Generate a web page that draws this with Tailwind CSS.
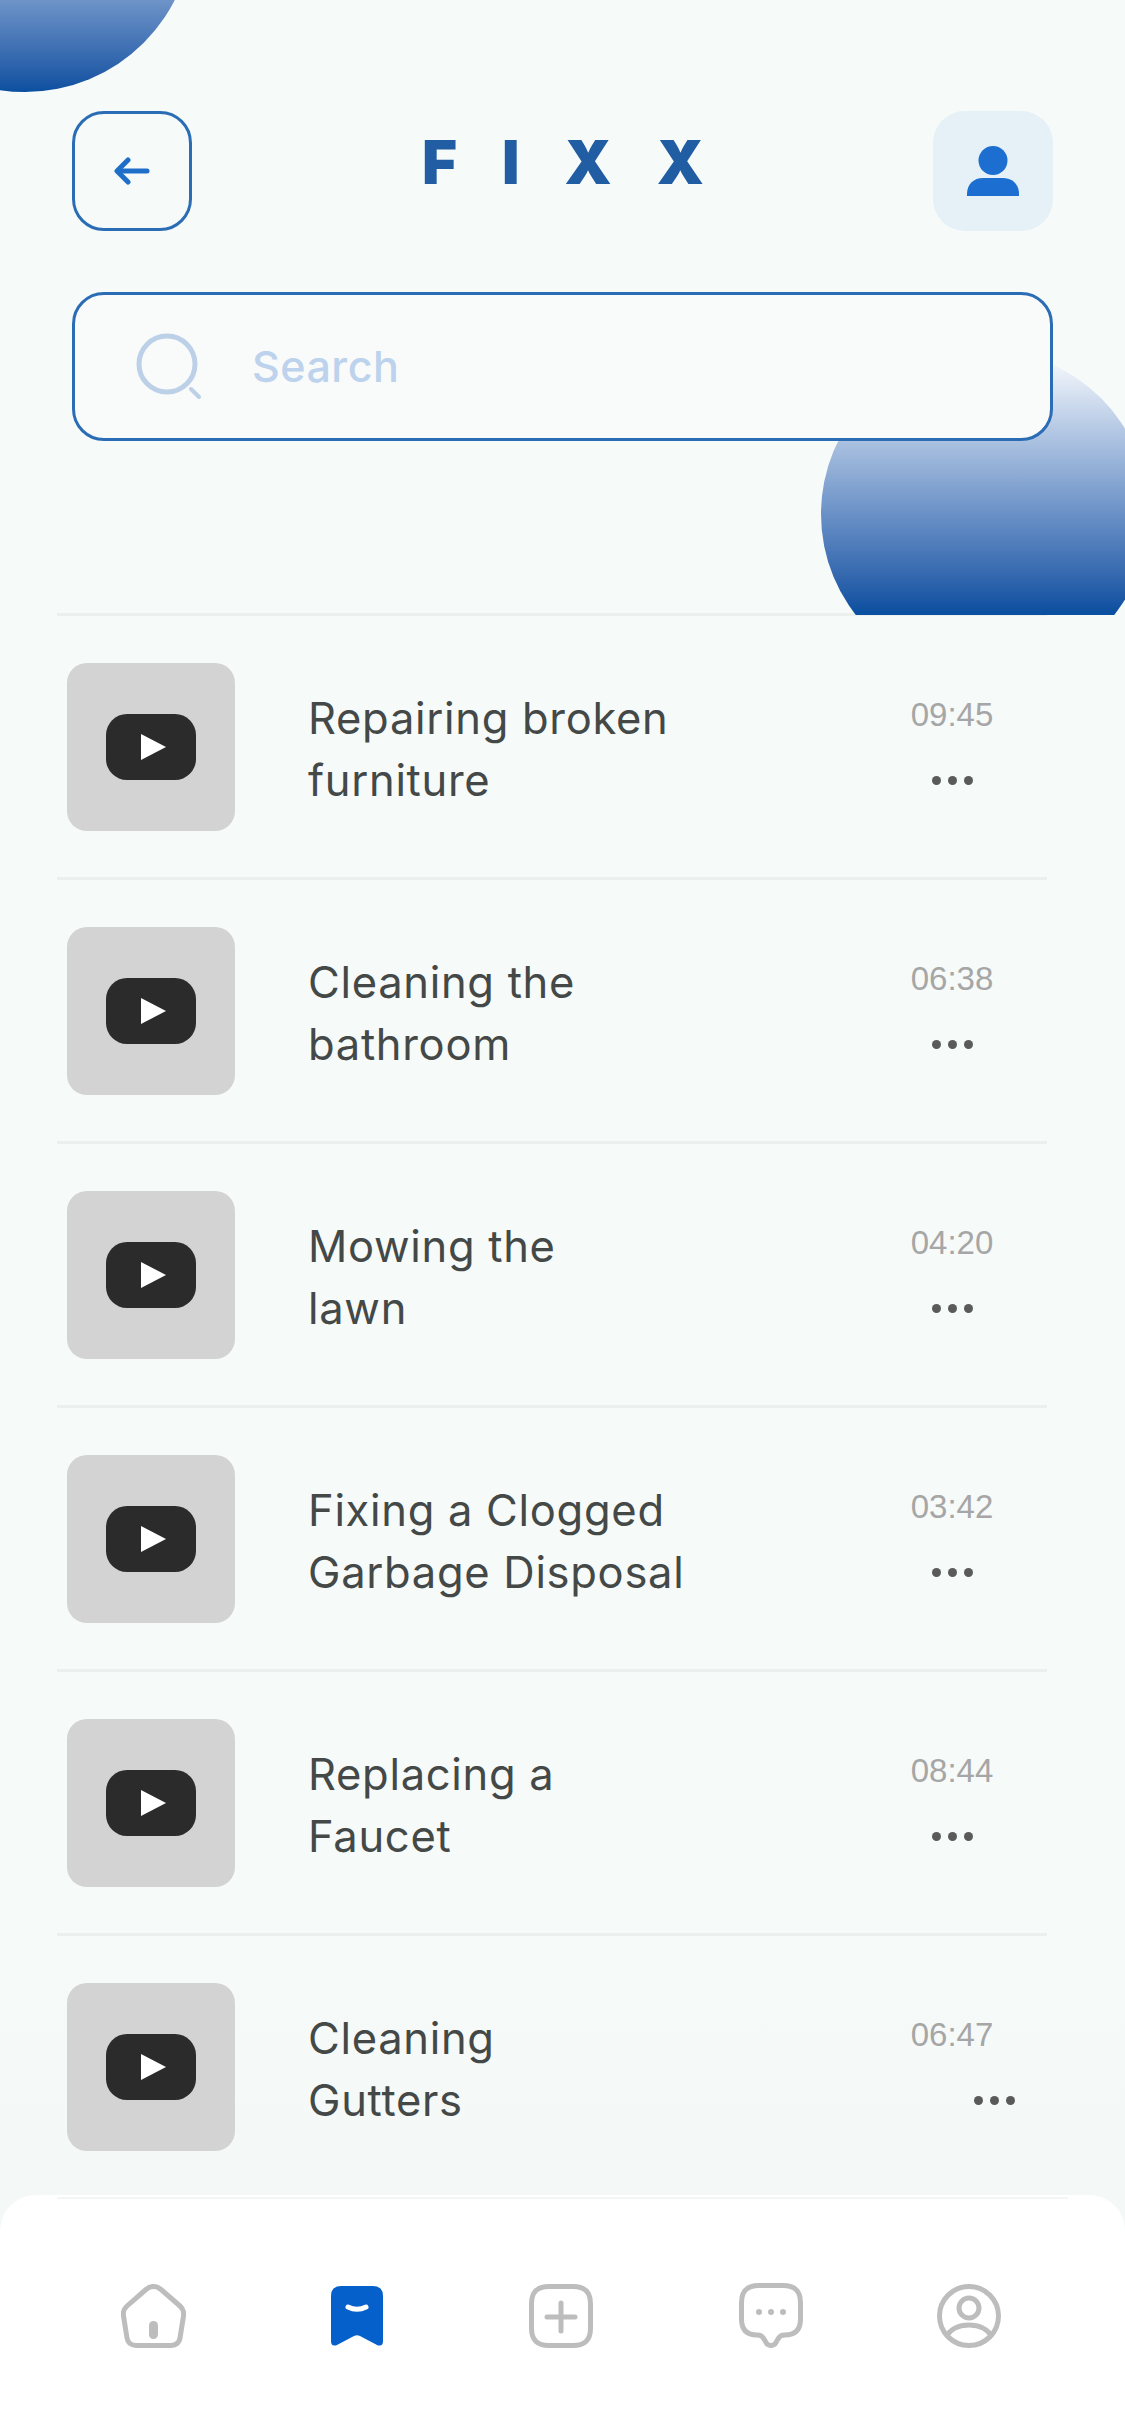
<!DOCTYPE html>
<html lang="en">
<head>
  <meta charset="UTF-8">
  <title>Fixx</title>
  <meta name="viewport" content="width=device-width, initial-scale=1.0">
  <script src="https://cdn.jsdelivr.net/npm/@tailwindcss/browser@4"></script>
</head>
<body class="bg-[#f5f9f8]">
  <div class="relative w-[1125px] h-[2436px] overflow-hidden bg-gradient-to-b from-[#f6faf9] from-80% to-[#f2f6f5] font-['Inter',sans-serif]">

    <!-- header -->
    <header class="relative h-[615px] -mb-[2px] overflow-hidden px-[72px] pt-[111px]">
      <div class="absolute left-[-143px] top-[-244px] w-[336px] h-[336px] rounded-full bg-gradient-to-b from-[#ffffff] from-[30%] to-[#0a4fa0]"></div>
      <div class="absolute left-[821px] top-[350px] w-[328px] h-[328px] rounded-full bg-gradient-to-b from-[#ffffff] to-[#0a4fa0] to-[80%]"></div>

      <div class="relative flex items-center justify-between">
        <button class="w-[120px] h-[120px] rounded-[32px] border-[3px] border-[#2a6db5] flex items-center justify-center">
          <svg width="36" height="28" viewBox="0 0 36 28" fill="none" stroke="#1f6fc9" stroke-width="5" stroke-linecap="round" stroke-linejoin="round"><path d="M33 14H4"/><path d="M14 3L3 14l11 11"/></svg>
        </button>
        <div class="text-[60px] leading-none font-black text-[#215da3] tracking-[45px] pl-[46px] mb-[18px]">FIXX</div>
        <div class="w-[120px] h-[120px] rounded-[32px] bg-[#e6f0f7] flex items-center justify-center">
          <svg width="52" height="50" viewBox="0 0 52 50" fill="#1c6fd0"><circle cx="26" cy="14.5" r="14.5"/><path d="M0 50v-2C0 38 7 32 16 32h20c9 0 16 6 16 16v2z"/></svg>
        </div>
      </div>

      <div class="relative mt-[61px] h-[149px] rounded-[32px] border-[3px] border-[#2a6db5] bg-[#f9fafa] flex items-center pl-[61px]">
        <svg width="66" height="68" viewBox="0 0 66 68" fill="none" stroke="#bcd0e8" stroke-linecap="round"><circle cx="31" cy="31" r="28" stroke-width="5"/><path d="M55 56l8 8" stroke-width="4"/></svg>
        <span class="ml-[50px] text-[43px] tracking-[0.5px] font-medium text-[#bdd2ec]">Search</span>
      </div>
    </header>

    <!-- video list -->
    <ul class="ml-[57px] w-[990px] border-t-[3px] border-[#ebefee]">
      <li class="h-[264px] border-b-[3px] border-[#ebefee] flex items-center pl-[10px]">
        <div class="w-[168px] h-[168px] rounded-[20px] bg-[#d3d3d3] flex items-center justify-center shrink-0">
          <svg width="90" height="66" viewBox="0 0 90 66"><rect width="90" height="66" rx="21" fill="#2b2b2b"/><path d="M35 20v26l25-13z" fill="#fff"/></svg>
        </div>
        <p class="ml-[73px] mt-[4px] flex-1 text-[43.5px] tracking-[0.7px] leading-[62px] text-[#444948]">Repairing broken<br>furniture</p>
        <div class="w-[120px] mr-[35px] self-start pt-[79px] flex flex-col items-center">
          <span class="font-['Liberation_Sans',sans-serif] text-[33px] leading-[40px] text-[#a6a6a6]">09:45</span>
          <div class="mt-[41px] flex gap-[7px]"><i class="w-[9px] h-[9px] rounded-full bg-[#5a5a5a]"></i><i class="w-[9px] h-[9px] rounded-full bg-[#5a5a5a]"></i><i class="w-[9px] h-[9px] rounded-full bg-[#5a5a5a]"></i></div>
        </div>
      </li>
      <li class="h-[264px] border-b-[3px] border-[#ebefee] flex items-center pl-[10px]">
        <div class="w-[168px] h-[168px] rounded-[20px] bg-[#d3d3d3] flex items-center justify-center shrink-0">
          <svg width="90" height="66" viewBox="0 0 90 66"><rect width="90" height="66" rx="21" fill="#2b2b2b"/><path d="M35 20v26l25-13z" fill="#fff"/></svg>
        </div>
        <p class="ml-[73px] mt-[4px] flex-1 text-[43.5px] tracking-[0.7px] leading-[62px] text-[#444948]">Cleaning the<br>bathroom</p>
        <div class="w-[120px] mr-[35px] self-start pt-[79px] flex flex-col items-center">
          <span class="font-['Liberation_Sans',sans-serif] text-[33px] leading-[40px] text-[#a6a6a6]">06:38</span>
          <div class="mt-[41px] flex gap-[7px]"><i class="w-[9px] h-[9px] rounded-full bg-[#5a5a5a]"></i><i class="w-[9px] h-[9px] rounded-full bg-[#5a5a5a]"></i><i class="w-[9px] h-[9px] rounded-full bg-[#5a5a5a]"></i></div>
        </div>
      </li>
      <li class="h-[264px] border-b-[3px] border-[#ebefee] flex items-center pl-[10px]">
        <div class="w-[168px] h-[168px] rounded-[20px] bg-[#d3d3d3] flex items-center justify-center shrink-0">
          <svg width="90" height="66" viewBox="0 0 90 66"><rect width="90" height="66" rx="21" fill="#2b2b2b"/><path d="M35 20v26l25-13z" fill="#fff"/></svg>
        </div>
        <p class="ml-[73px] mt-[4px] flex-1 text-[43.5px] tracking-[0.7px] leading-[62px] text-[#444948]">Mowing the<br>lawn</p>
        <div class="w-[120px] mr-[35px] self-start pt-[79px] flex flex-col items-center">
          <span class="font-['Liberation_Sans',sans-serif] text-[33px] leading-[40px] text-[#a6a6a6]">04:20</span>
          <div class="mt-[41px] flex gap-[7px]"><i class="w-[9px] h-[9px] rounded-full bg-[#5a5a5a]"></i><i class="w-[9px] h-[9px] rounded-full bg-[#5a5a5a]"></i><i class="w-[9px] h-[9px] rounded-full bg-[#5a5a5a]"></i></div>
        </div>
      </li>
      <li class="h-[264px] border-b-[3px] border-[#ebefee] flex items-center pl-[10px]">
        <div class="w-[168px] h-[168px] rounded-[20px] bg-[#d3d3d3] flex items-center justify-center shrink-0">
          <svg width="90" height="66" viewBox="0 0 90 66"><rect width="90" height="66" rx="21" fill="#2b2b2b"/><path d="M35 20v26l25-13z" fill="#fff"/></svg>
        </div>
        <p class="ml-[73px] mt-[4px] flex-1 text-[43.5px] tracking-[0.7px] leading-[62px] text-[#444948]">Fixing a Clogged<br>Garbage Disposal</p>
        <div class="w-[120px] mr-[35px] self-start pt-[79px] flex flex-col items-center">
          <span class="font-['Liberation_Sans',sans-serif] text-[33px] leading-[40px] text-[#a6a6a6]">03:42</span>
          <div class="mt-[41px] flex gap-[7px]"><i class="w-[9px] h-[9px] rounded-full bg-[#5a5a5a]"></i><i class="w-[9px] h-[9px] rounded-full bg-[#5a5a5a]"></i><i class="w-[9px] h-[9px] rounded-full bg-[#5a5a5a]"></i></div>
        </div>
      </li>
      <li class="h-[264px] border-b-[3px] border-[#ebefee] flex items-center pl-[10px]">
        <div class="w-[168px] h-[168px] rounded-[20px] bg-[#d3d3d3] flex items-center justify-center shrink-0">
          <svg width="90" height="66" viewBox="0 0 90 66"><rect width="90" height="66" rx="21" fill="#2b2b2b"/><path d="M35 20v26l25-13z" fill="#fff"/></svg>
        </div>
        <p class="ml-[73px] mt-[4px] flex-1 text-[43.5px] tracking-[0.7px] leading-[62px] text-[#444948]">Replacing a<br>Faucet</p>
        <div class="w-[120px] mr-[35px] self-start pt-[79px] flex flex-col items-center">
          <span class="font-['Liberation_Sans',sans-serif] text-[33px] leading-[40px] text-[#a6a6a6]">08:44</span>
          <div class="mt-[41px] flex gap-[7px]"><i class="w-[9px] h-[9px] rounded-full bg-[#5a5a5a]"></i><i class="w-[9px] h-[9px] rounded-full bg-[#5a5a5a]"></i><i class="w-[9px] h-[9px] rounded-full bg-[#5a5a5a]"></i></div>
        </div>
      </li>
      <li class="h-[264px] border-b-[3px] border-[#ebefee] flex items-center pl-[10px]">
        <div class="w-[168px] h-[168px] rounded-[20px] bg-[#d3d3d3] flex items-center justify-center shrink-0">
          <svg width="90" height="66" viewBox="0 0 90 66"><rect width="90" height="66" rx="21" fill="#2b2b2b"/><path d="M35 20v26l25-13z" fill="#fff"/></svg>
        </div>
        <p class="ml-[73px] mt-[4px] flex-1 text-[43.5px] tracking-[0.7px] leading-[62px] text-[#444948]">Cleaning<br>Gutters</p>
        <div class="w-[120px] mr-[35px] self-start pt-[79px] flex flex-col items-center">
          <span class="font-['Liberation_Sans',sans-serif] text-[33px] leading-[40px] text-[#a6a6a6]">06:47</span>
          <div class="mt-[41px] ml-[84px] flex gap-[7px]"><i class="w-[9px] h-[9px] rounded-full bg-[#5a5a5a]"></i><i class="w-[9px] h-[9px] rounded-full bg-[#5a5a5a]"></i><i class="w-[9px] h-[9px] rounded-full bg-[#5a5a5a]"></i></div>
        </div>
      </li>
    </ul>

    <!-- bottom nav -->
    <nav class="absolute inset-x-0 bottom-0 h-[241px] bg-white rounded-t-[36px]">
      <div class="mx-[57px] mt-[2px] h-[2px] bg-[#f2f6f5]"></div>
      <div class="flex items-center pl-[121px] pt-[84px]">
        <svg width="65" height="64" viewBox="0 0 65 64" fill="none" stroke="#bdbdbd" stroke-width="5"><path d="M25 5.5Q32.5-.5 40 5.5L59 22Q63.500 26 62.500 32L59 54Q58 61 50 61.500H15Q7 61 6 54L2.500 32Q1.500 26 6 22Z" stroke-linejoin="round"/><rect x="28" y="37" width="9" height="18" rx="4.500" fill="#bdbdbd" stroke="none"/></svg>
        <svg class="ml-[145px]" width="52" height="60" viewBox="0 0 52 60"><path d="M10 0H42Q52 0 52 10V55Q52 61 46 59L29 50Q26 48.500 23 50L6 59Q0 61 0 55V10Q0 0 10 0Z" fill="#0560cb"/><path d="M17 21Q26 25.500 35 21" fill="none" stroke="#fff" stroke-width="5" stroke-linecap="round"/></svg>
        <svg class="ml-[146px]" width="64" height="64" viewBox="0 0 64 64" fill="none" stroke="#bdbdbd" stroke-width="5" stroke-linecap="round"><path d="M20 2.500H44C56 2.500 61.500 8 61.500 20V44C61.500 56 56 61.500 44 61.500H20C8 61.500 2.500 56 2.500 44V20C2.500 8 8 2.500 20 2.500Z"/><path d="M32 19V47M18 33H46"/></svg>
        <svg class="ml-[146px]" width="64" height="65" viewBox="0 0 64 65" fill="none" stroke="#bdbdbd" stroke-width="5"><path d="M20 2.500H44C56 2.500 61.500 8 61.500 20V36C61.500 47 56 52 46 52C42 52 41 53 39 56L36 61Q32 64 28 61L25 56C23 53 22 52 18 52C8 52 2.500 47 2.500 36V20C2.500 8 8 2.500 20 2.500Z"/><g fill="#bdbdbd" stroke="none"><circle cx="20" cy="29" r="3"/><circle cx="32" cy="29" r="3"/><circle cx="44" cy="29" r="3"/></g></svg>
        <svg class="ml-[134px]" width="64" height="64" viewBox="0 0 64 64" fill="none" stroke="#bdbdbd" stroke-width="5"><circle cx="32" cy="32" r="29.500"/><circle cx="32" cy="24" r="10"/><path d="M9 53C13 45 22 41 32 41S51 45 55 53"/></svg>
      </div>
    </nav>
  </div>
</body>
</html>
